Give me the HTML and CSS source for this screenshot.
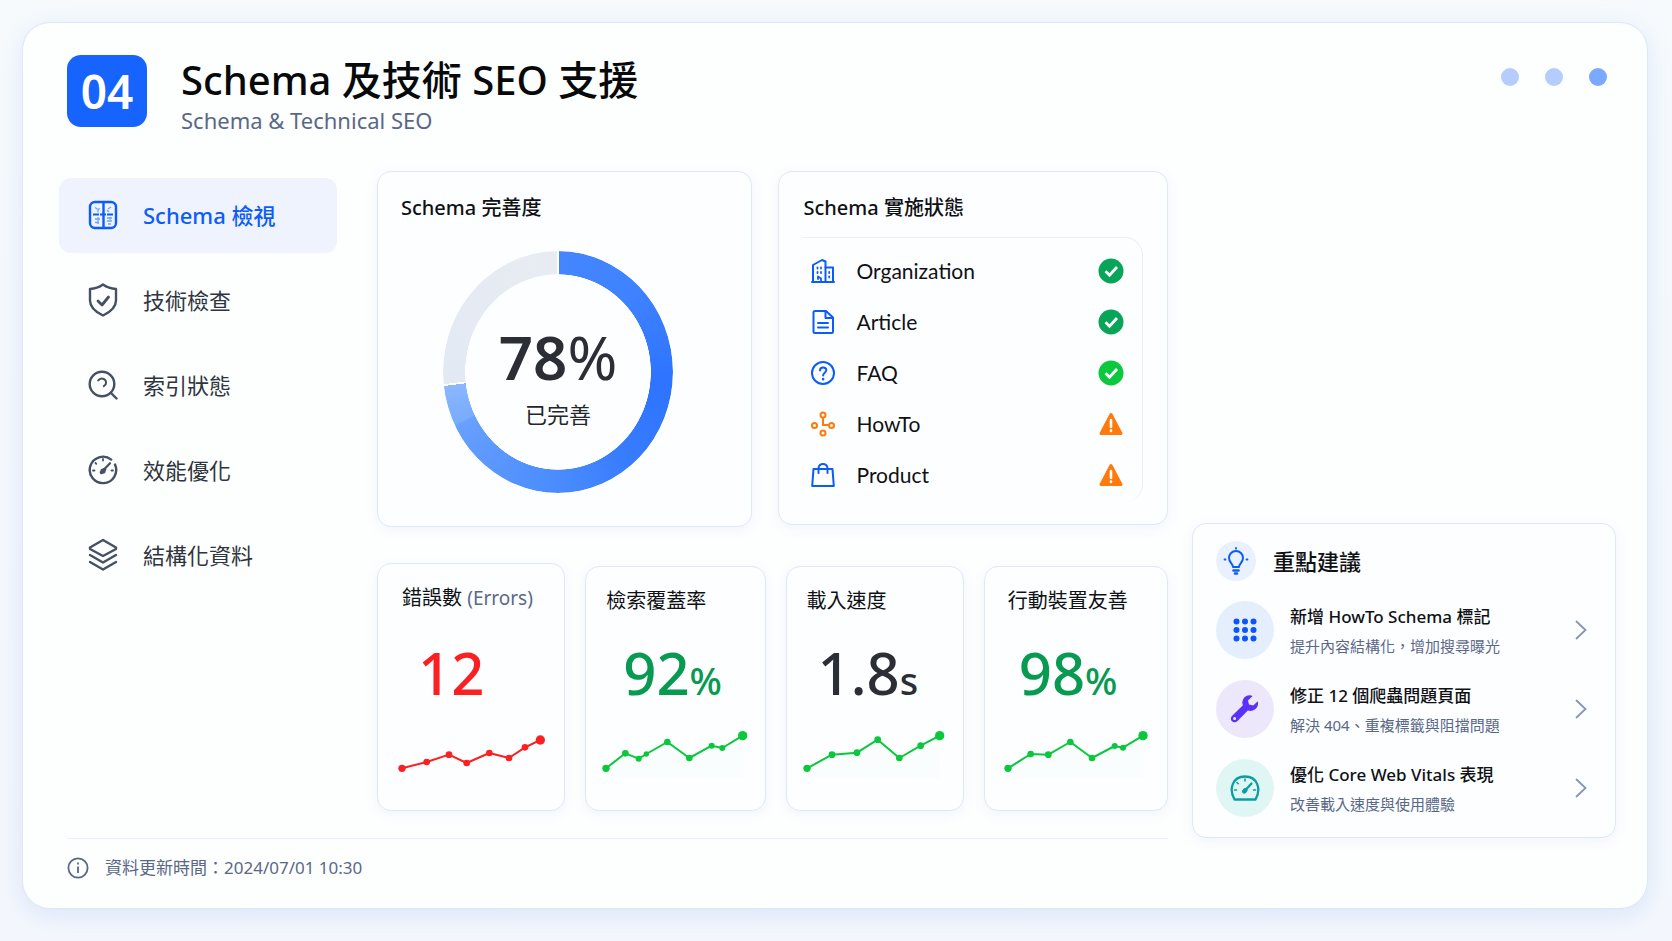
FILE: index.html
```html
<!DOCTYPE html>
<html lang="zh-Hant">
<head>
<meta charset="utf-8">
<meta name="viewport" content="width=device-width, initial-scale=1">
<title>Schema 及技術 SEO 支援</title>
<link rel="stylesheet" href="styles.css">
</head>
<body>
<div class="panel">
  <header class="header">
    <div class="badge">04</div>
    <div class="heading">
      <h1 class="heading-title">Schema 及技術 SEO 支援</h1>
      <p class="heading-sub">Schema &amp; Technical SEO</p>
    </div>
    <div class="dots" aria-hidden="true"><span class="dot"></span><span class="dot"></span><span class="dot dot-on"></span></div>
  </header>

  <div class="layout">
    <nav class="side">
      <a class="side-link side-link-on" href="#schema">
        <svg class="side-icon" viewBox="0 0 30 30" fill="none" stroke="currentColor" stroke-width="2.4">
          <rect x="2" y="2" width="26" height="26" rx="5"/>
          <path d="M15.5 2v26"/>
          <path d="M5 14.5h20" stroke-width="1.8" stroke-dasharray="6 1"/>
          <path d="M7 7.500l3 2 2-1M10 9.500v3M20 9l3-2M19 10l2 2M7 19h5M7 22.500h4M10 17v7M19 18h5M19 21h5M20 24h3M22 17v3" stroke-width="1.300" opacity=".55"/>
        </svg>
        <span>Schema 檢視</span>
      </a>
      <a class="side-link" href="#tech">
        <svg class="side-icon side-icon-tall" viewBox="0 0 30 36" fill="none" stroke="currentColor" stroke-width="2.4" stroke-linecap="round" stroke-linejoin="round">
          <path d="M15 2.500C18.500 5 23 6.700 28 7v11.500c0 6.500-5.500 11.500-13 15-7.500-3.500-13-8.500-13-15V7c5-.3 9.500-2 13-4.500z"/>
          <path d="M10 19l4 4 6.500-8" stroke-width="2.800"/>
        </svg>
        <span>技術檢查</span>
      </a>
      <a class="side-link" href="#index">
        <svg class="side-icon" viewBox="0 0 30 30" fill="none" stroke="currentColor" stroke-width="2.400" stroke-linecap="round">
          <circle cx="14" cy="14" r="12.300"/>
          <path d="M23 23l5.500 5.500"/>
          <path d="M10.200 10.500c1.200-1.800 3.500-2.500 5.600-1.500 3 1.500 3.200 5.500 0 7.200" stroke-width="2"/>
        </svg>
        <span>索引狀態</span>
      </a>
      <a class="side-link" href="#speed">
        <svg class="side-icon" viewBox="0 0 30 30" fill="none" stroke="currentColor" stroke-width="2.400" stroke-linecap="round">
          <path d="M23.200 4.600A13.200 13.200 0 1 0 27 9.500"/>
          <path d="M15 4v1.500M7.500 8l.8.800M5 15.500h1.500M23.500 15.500H25" stroke-width="1.800"/>
          <path d="M15.800 14.800L22 8.200" stroke-width="2.200"/>
          <circle cx="15" cy="16" r="2.600" fill="currentColor" stroke="none"/>
          <path d="M13.500 17.500l3-3" stroke-width="3.500"/>
        </svg>
        <span>效能優化</span>
      </a>
      <a class="side-link" href="#data">
        <svg class="side-icon side-icon-tall" viewBox="0 0 30 36" fill="none" stroke="currentColor" stroke-width="2.400" stroke-linecap="round" stroke-linejoin="round">
          <path d="M15 3l13 7.500V12l-13 7L2 12v-1.500z"/>
          <path d="M2 18l13 7.500L28 18"/>
          <path d="M2 25l13 7.500L28 25"/>
        </svg>
        <span>結構化資料</span>
      </a>
    </nav>

    <main class="main">
      <div class="overview">
        <section class="card score">
          <h2 class="card-title">Schema 完善度</h2>
          <div class="donut">
            <div class="donut-ring"></div>
            <div class="donut-label">
              <strong class="donut-value">78<span class="donut-percent">%</span></strong>
              <span class="donut-note">已完善</span>
            </div>
          </div>
        </section>

        <section class="card status">
          <h2 class="card-title">Schema 實施狀態</h2>
          <ul class="status-list">
            <li class="status-row">
              <svg class="row-icon" viewBox="0 0 24 24" fill="none" stroke="currentColor" stroke-width="2" stroke-linejoin="round" stroke-linecap="round">
                <path d="M1 23h22"/><path d="M2 23V6l9-5 3.500 1.500V23"/><path d="M14.500 8.500H22V23"/>
                <path d="M6.500 8.500v1M10 8.500v1M6.500 13v1M10 13v1M18.200 13v1M18.200 17.500v1M7 20v-2.500l3 2V22" stroke-width="1.800"/>
              </svg>
              <span>Organization</span>
              <svg class="mark" viewBox="0 0 26 26" role="img" aria-label="完成"><circle cx="13" cy="13" r="12.500" fill="#08a558"/><path d="M7.500 13.300l4 4 7.500-8.300" fill="none" stroke="#fff" stroke-width="2.800"/></svg>
            </li>
            <li class="status-row">
              <svg class="row-icon" viewBox="0 0 24 24" fill="none" stroke="currentColor" stroke-width="2" stroke-linejoin="round" stroke-linecap="round">
                <path d="M4 1h11l7 6.500V21.500a1.500 1.500 0 0 1-1.500 1.500H4a1.500 1.500 0 0 1-1.500-1.500v-19A1.500 1.500 0 0 1 4 1z"/><path d="M14.500 1.500V8H21"/>
                <path d="M7 13h10M7 17.500h10"/>
              </svg>
              <span>Article</span>
              <svg class="mark" viewBox="0 0 26 26" role="img" aria-label="完成"><circle cx="13" cy="13" r="12.500" fill="#08a558"/><path d="M7.500 13.300l4 4 7.500-8.300" fill="none" stroke="#fff" stroke-width="2.800"/></svg>
            </li>
            <li class="status-row">
              <svg class="row-icon" viewBox="0 0 24 24" fill="none" stroke="currentColor" stroke-width="2" stroke-linecap="round">
                <circle cx="12" cy="12" r="11"/><path d="M9 9.500c0-4 6.300-3.800 6.300-.2 0 2.400-3.200 2.500-3.200 5.200"/><path d="M12.100 18v.200" stroke-width="2.400"/>
              </svg>
              <span>FAQ</span>
              <svg class="mark" viewBox="0 0 26 26" role="img" aria-label="完成"><circle cx="13" cy="13" r="12.500" fill="#0cc83f"/><path d="M7.500 13.300l4 4 7.500-8.300" fill="none" stroke="#fff" stroke-width="2.800"/></svg>
            </li>
            <li class="status-row">
              <svg class="row-icon row-icon-warn" viewBox="0 0 24 24" fill="none" stroke="currentColor" stroke-width="2">
                <circle cx="12" cy="3" r="2.500"/><circle cx="3.500" cy="13.500" r="2.500"/><circle cx="20.500" cy="13.500" r="2.500"/><circle cx="12" cy="21" r="2.500"/><path d="M12 5.500v7.500h6"/>
              </svg>
              <span>HowTo</span>
              <svg class="mark" viewBox="0 0 26 26" role="img" aria-label="警告"><path d="M13 3.500L23 22.500H3z" fill="#ff7a0c" stroke="#ff7a0c" stroke-width="3" stroke-linejoin="round"/><path d="M13 9v7M13 19.500v.500" stroke="#fff" stroke-width="2.600" stroke-linecap="round"/></svg>
            </li>
            <li class="status-row">
              <svg class="row-icon" viewBox="0 0 24 24" fill="none" stroke="currentColor" stroke-width="2" stroke-linejoin="round" stroke-linecap="round">
                <path d="M2.500 6h19l1.300 17H1.200z"/><path d="M7.500 10V5.500C7.500-.6 16.500-.6 16.500 5.500V10"/>
              </svg>
              <span>Product</span>
              <svg class="mark" viewBox="0 0 26 26" role="img" aria-label="警告"><path d="M13 3.500L23 22.500H3z" fill="#ff7a0c" stroke="#ff7a0c" stroke-width="3" stroke-linejoin="round"/><path d="M13 9v7M13 19.500v.500" stroke="#fff" stroke-width="2.600" stroke-linecap="round"/></svg>
            </li>
          </ul>
        </section>
      </div>

      <div class="metrics">
        <section class="card metric metric-lead">
          <h2 class="metric-title">錯誤數 <small class="metric-hint">(Errors)</small></h2>
          <p class="metric-value tone-bad">12</p>
          <svg class="spark spark-bad" viewBox="85 530 450 150">
            <path class="spark-line" d="M97 651L171 632 238 610 291 635 359 605 418 620 466 588 512 566"/>
            <g class="spark-dots"><circle cx="97" cy="651" r="11"/><circle cx="171" cy="632" r="10"/><circle cx="238" cy="610" r="10"/><circle cx="291" cy="635" r="10"/><circle cx="359" cy="605" r="10"/><circle cx="418" cy="620" r="10"/><circle cx="466" cy="588" r="10"/><circle cx="512" cy="566" r="14"/></g>
          </svg>
        </section>
        <section class="card metric">
          <h2 class="metric-title">檢索覆蓋率</h2>
          <p class="metric-value metric-value-far tone-good">92<span class="metric-unit">%</span></p>
          <svg class="spark spark-good" viewBox="697 530 450 150">
            <path class="spark-area" d="M709 651L767 606 807 622 830 608 893 572 959 620 1026 583 1058 590 1119 553V680H709z"/>
            <path class="spark-line" d="M709 651L767 606 807 622 830 608 893 572 959 620 1026 583 1058 590 1119 553"/>
            <g class="spark-dots"><circle cx="709" cy="651" r="11"/><circle cx="767" cy="606" r="10"/><circle cx="807" cy="622" r="9"/><circle cx="830" cy="608" r="8"/><circle cx="893" cy="572" r="10"/><circle cx="959" cy="620" r="10"/><circle cx="1026" cy="583" r="9"/><circle cx="1058" cy="590" r="9"/><circle cx="1119" cy="553" r="14"/></g>
          </svg>
        </section>
        <section class="card metric">
          <h2 class="metric-title">載入速度</h2>
          <p class="metric-value metric-value-near">1.8<span class="metric-unit">s</span></p>
          <svg class="spark spark-good" viewBox="102 530 450 150">
            <path class="spark-area" d="M114 651L189 610 264 604 326 565 391 620 455 583 512 553V680H114z"/>
            <path class="spark-line" d="M114 651L189 610 264 604 326 565 391 620 455 583 512 553"/>
            <g class="spark-dots"><circle cx="114" cy="651" r="11"/><circle cx="189" cy="610" r="10"/><circle cx="264" cy="604" r="10"/><circle cx="326" cy="565" r="10"/><circle cx="391" cy="620" r="10"/><circle cx="455" cy="583" r="10"/><circle cx="512" cy="553" r="14"/></g>
          </svg>
        </section>
        <section class="card metric metric-last">
          <h2 class="metric-title">行動裝置友善</h2>
          <p class="metric-value metric-value-near tone-good">98<span class="metric-unit">%</span></p>
          <svg class="spark spark-good" viewBox="700 530 450 150">
            <path class="spark-area" d="M712 651L780 608 833 610 899 572 964 620 1032 584 1057 589 1117 553V680H712z"/>
            <path class="spark-line" d="M712 651L780 608 833 610 899 572 964 620 1032 584 1057 589 1117 553"/>
            <g class="spark-dots"><circle cx="712" cy="651" r="11"/><circle cx="780" cy="608" r="10"/><circle cx="833" cy="610" r="10"/><circle cx="899" cy="572" r="10"/><circle cx="964" cy="620" r="10"/><circle cx="1032" cy="584" r="9"/><circle cx="1057" cy="589" r="9"/><circle cx="1117" cy="553" r="14"/></g>
          </svg>
        </section>
      </div>
    </main>

    <aside class="card tips">
      <div class="tips-head">
        <span class="tips-bulb">
          <svg class="bulb-icon" viewBox="0 0 26 28" fill="none" stroke="currentColor" stroke-width="2" stroke-linecap="round" stroke-linejoin="round">
            <path d="M10 20c0-3-4-4.500-4-9a7 7 0 0 1 14 0c0 4.500-4 6-4 9z"/><path d="M10.500 23.500h5M12 26.500h2" stroke-width="2.600"/><path d="M13 1v.8M1.500 12.500h1M23.500 12.500h1" stroke-width="1.800"/>
          </svg>
        </span>
        <h2 class="tips-title">重點建議</h2>
      </div>
      <a class="tip" href="#howto">
        <span class="tip-icon tip-blue">
          <svg class="tip-svg" viewBox="0 0 30 30" fill="currentColor"><circle cx="6.500" cy="6.500" r="3"/><circle cx="15" cy="6.500" r="3"/><circle cx="23.500" cy="6.500" r="3"/><circle cx="6.500" cy="15" r="3"/><circle cx="15" cy="15" r="3"/><circle cx="23.500" cy="15" r="3"/><circle cx="6.500" cy="23.500" r="3"/><circle cx="15" cy="23.500" r="3"/><circle cx="23.500" cy="23.500" r="3"/></svg>
        </span>
        <span class="tip-text"><strong class="tip-title">新增 HowTo Schema 標記</strong><span class="tip-note">提升內容結構化，增加搜尋曝光</span></span>
        <svg class="chevron" viewBox="0 0 12 20"><path d="M1.500 1.500L10.500 10l-9 8.500"/></svg>
      </a>
      <a class="tip" href="#crawl">
        <span class="tip-icon tip-violet">
          <svg class="tip-svg" viewBox="0 0 30 30" fill="currentColor"><path d="M27.800 7.200l-4.600 4.400-4.200-1-1-4.200 4.600-4.500c-3.500-1.300-7.500-.2-9.300 3-1.200 2.200-1.200 4.300-.4 6.400L2.200 21.700c-1.700 1.600-1.800 4.100-.3 5.600s4 1.400 5.600-.3l10.300-10.500c2.400.8 4.900.6 7-.9 2.700-2 3.900-5.200 3-8.400zM4.600 26.100a1.500 1.500 0 1 1 0-3 1.500 1.500 0 0 1 0 3z"/></svg>
        </span>
        <span class="tip-text"><strong class="tip-title">修正 12 個爬蟲問題頁面</strong><span class="tip-note">解決 404、重複標籤與阻擋問題</span></span>
        <svg class="chevron" viewBox="0 0 12 20"><path d="M1.500 1.500L10.500 10l-9 8.500"/></svg>
      </a>
      <a class="tip" href="#vitals">
        <span class="tip-icon tip-teal">
          <svg class="tip-svg" viewBox="0 0 30 30" fill="none" stroke="currentColor" stroke-width="2.300" stroke-linecap="round" stroke-linejoin="round"><path d="M4.500 26.500C-1.500 16 2.500 3.500 15 3.500S31.500 16 25.500 26.500z"/><path d="M15 6v2M7 9.500l1.200 1.200M4.500 17h2M23.500 17h2" stroke-width="1.600"/><path d="M15.500 17L21.500 10.500"/><path d="M14.200 18.300l1.200-1.200" stroke-width="4.500"/></svg>
        </span>
        <span class="tip-text"><strong class="tip-title">優化 Core Web Vitals 表現</strong><span class="tip-note">改善載入速度與使用體驗</span></span>
        <svg class="chevron" viewBox="0 0 12 20"><path d="M1.500 1.500L10.500 10l-9 8.500"/></svg>
      </a>
    </aside>

    <footer class="footer">
      <svg class="info-icon" viewBox="0 0 22 22" fill="none" stroke="currentColor" stroke-width="1.800"><circle cx="11" cy="11" r="9.600"/><path d="M11 9.500v6.500M11 5.500v2"/></svg>
      <span>資料更新時間：2024/07/01 10:30</span>
    </footer>
  </div>
</div>
</body>
</html>
```
FILE: styles.css
```css
* { box-sizing: border-box; }

body {
  margin: 0;
  min-height: 100vh;
  padding: 22px 24px 32px 22px;
  display: flex;
  background: linear-gradient(180deg, #f6fafd, #f3f7fd);
  color: #0f1115;
  font-family: "Noto Sans", "Noto Sans CJK TC", sans-serif;
  font-size: 20px;
  line-height: 30px;
}

h1, h2, p, ul { margin: 0; padding: 0; font-weight: 500; }
a { color: inherit; text-decoration: none; }
svg { display: block; flex: none; }

.panel {
  flex: 1;
  min-width: 0;
  padding: 32px 31px 0 36px;
  background: #fdfefe;
  border: 1px solid #dde7f6;
  border-radius: 28px;
  box-shadow: 0 6px 24px rgba(120, 160, 225, .2);
}

.header { display: flex; align-items: flex-start; padding: 0 9px 0 8px; min-height: 116px; }
.badge {
  width: 80px;
  height: 72px;
  border-radius: 14px;
  background: #1763fd;
  color: #fff;
  font-size: 46px;
  line-height: 72px;
  font-weight: 600;
  text-align: center;
}
.heading { margin-left: 34px; }
.heading-title { font-size: 40px; line-height: 50px; font-weight: 500; color: #08090b; }
.heading-sub { font-size: 22px; line-height: 30px; font-weight: 400; color: #5a6887; }
.dots { display: flex; gap: 26px; margin-left: auto; padding-top: 13px; }
.dot { width: 18px; height: 18px; border-radius: 50%; background: #b5cdfd; }
.dot-on { background: #7ba9fd; }

.layout {
  display: grid;
  grid-template-columns: 278px minmax(0, 1fr) 424px;
  grid-template-areas: "side main tips" "foot foot .";
}

.side { grid-area: side; display: flex; flex-direction: column; gap: 10px; padding-top: 7px; }
.side-link {
  display: flex;
  align-items: center;
  gap: 25px;
  height: 75px;
  padding: 0 0 2px 29px;
  border-radius: 12px;
  color: #2f3540;
  font-size: 22px;
}
.side-link-on { background: #eef3fe; color: #0c5cf8; font-weight: 500; }
.side-icon { width: 30px; height: 30px; color: #465064; }
.side-icon-tall { height: 36px; }
.side-link-on .side-icon { color: #0c5cf8; }

.main { grid-area: main; padding: 0 24px 27px 40px; display: flex; flex-direction: column; gap: 36px; }
.card {
  background: #fdfeff;
  border: 1px solid #dfe8f7;
  border-radius: 14px;
  box-shadow: 0 3px 12px rgba(130, 165, 225, .1);
}
.card-title { font-size: 20px; line-height: 30px; font-weight: 500; }

.overview { display: grid; grid-template-columns: 375fr 389fr; column-gap: 26px; align-items: start; }
.score { padding: 21px 23px 33px; }
.donut { display: grid; width: 230px; height: 242px; margin: 28px auto 0 42px; }
.donut-ring, .donut-label { grid-area: 1 / 1; }
.donut-ring {
  border-radius: 50%;
  background: conic-gradient(#fff 0 .4deg, #4486fd .4deg, #3f82ff 45deg, #2d73ff 95deg, #377bff 140deg, #4c8efe 185deg, #619bfd 230deg, #69a1fd 242deg, #78acfd 243deg, #8bb7fe 263deg, #fff 263deg 264deg, #e3e9f4 264deg, #e8ecf2 359.500deg, #fff 359.500deg);
  mask: radial-gradient(farthest-side, transparent 80.500%, #000 81%);
}
.donut-label { display: flex; flex-direction: column; align-items: center; padding-top: 68px; }
.donut-value { font-size: 60px; line-height: 76px; font-weight: 600; color: #2b2e35; }
.donut-percent { font-weight: 400; }
.donut-note { font-size: 22px; line-height: 38px; color: #23262c; }

.status { padding: 21px 24px 22px; }
.status-list {
  list-style: none;
  margin-top: 14px;
  padding: 7px 18px 2px 8px;
  border-top: 1px solid #e9eff9;
  border-right: 1px solid #e9eff9;
  border-radius: 0 18px 18px 0;
}
.status-row { display: flex; align-items: center; height: 51px; font-family: Lato, "Noto Sans", sans-serif; font-size: 21px; font-weight: 400; }
.row-icon { width: 24px; height: 24px; margin-right: 21px; color: #0c5cf8; overflow: visible; }
.row-icon-warn { color: #ff7a0c; }
.mark { width: 26px; height: 26px; margin-left: auto; }

.metrics { display: grid; grid-template-columns: 188fr 180fr 178fr 184fr; column-gap: 20px; align-items: end; }
.metric { padding: 19px 0 32px 20px; }
.metric-lead { padding-left: 24px; }
.metric-last { padding-left: 23px; }
.metric-title { font-size: 20px; line-height: 30px; white-space: nowrap; font-weight: 400; }
.metric-lead .metric-title { margin-bottom: 3px; }
.metric-hint { font-size: 19px; line-height: 20px; color: #5a6887; }
.metric-value { padding: 21px 0 19px 16px; font-size: 58px; line-height: 72px; font-weight: 500; color: #2b2e35; white-space: nowrap; }
.metric-value-far { padding-left: 17px; }
.metric-value-near { padding-left: 11px; }
.metric-unit { font-size: 38px; line-height: 38px; }
.tone-bad { color: #fb2022; }
.tone-good { color: #079a50; }
.spark { width: 150px; height: 50px; margin-left: -4px; }
.spark-line { fill: none; stroke: currentColor; stroke-width: 6; stroke-linejoin: round; }
.spark-dots { fill: currentColor; }
.spark-area { fill: #0cc83f; opacity: .01; }
.spark-bad { color: #fb2022; }
.spark-good { color: #0ac83c; }

.tips { grid-area: tips; align-self: end; padding: 15px 28px 10px 23px; }
.tips-head { display: flex; align-items: center; gap: 17px; height: 44px; margin-bottom: 7px; }
.tips-bulb { display: grid; place-items: center; width: 40px; height: 40px; border-radius: 50%; background: #e9f1fe; color: #0c5cf8; }
.bulb-icon { width: 26px; height: 28px; }
.tips-title { font-size: 22px; line-height: 32px; font-weight: 500; }
.tip { display: flex; align-items: center; height: 79px; }
.tip-icon { display: grid; place-items: center; flex: none; width: 58px; height: 58px; border-radius: 50%; margin-right: 16px; }
.tip-blue { background: #e4eefd; color: #0c55fb; }
.tip-violet { background: #ece7fb; color: #5a30fb; }
.tip-teal { background: #e0f6f4; color: #0a9e9e; }
.tip-svg { width: 30px; height: 30px; }
.tip-text { display: flex; flex-direction: column; min-width: 0; padding-top: 2px; }
.tip-title { font-size: 17px; line-height: 30px; font-weight: 500; }
.tip-note { font-size: 15px; line-height: 28px; color: #5a6887; }
.chevron { width: 12px; height: 20px; margin-left: auto; fill: none; stroke: #8395bb; stroke-width: 1.800; stroke-linecap: round; }

.footer {
  grid-area: foot;
  display: flex;
  align-items: center;
  gap: 16px;
  height: 58px;
  margin: 0 24px 0 8px;
  border-top: 1px solid #e9eff9;
  color: #5a6887;
  font-size: 17px;
}
.info-icon { width: 22px; height: 22px; }
```
